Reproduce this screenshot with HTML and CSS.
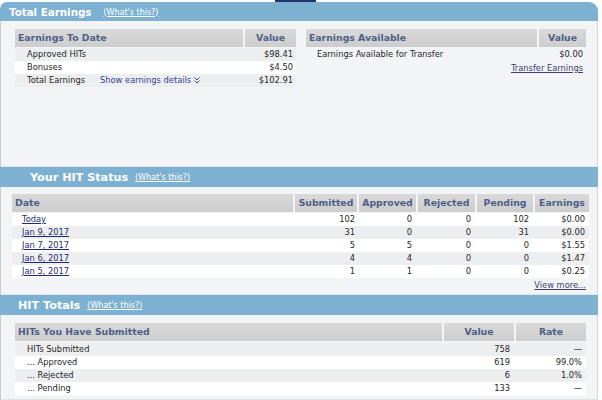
FILE: index.html
```html
<!DOCTYPE html>
<html>
<head>
<meta charset="utf-8">
<link rel="stylesheet" href="styles.css">
</head>
<body>
<div class="page">
  <div class="topstrip"><span class="tab"></span></div>

  <section class="sec">
    <div class="bar bar-round bar-earn">
      <span class="bar-title t-earn">Total Earnings</span>
      <a class="whats w-earn">(What's this?)</a>
    </div>
    <div class="panel panel-earn">
      <div class="tbl tbl-todate">
        <div class="thead g-todate">
          <div class="th th-left">Earnings To Date</div>
          <div class="th th-sep">Value</div>
        </div>
        <div class="row row-todate r-gray"><span>Approved HITs</span><span></span><span class="num">$98.41</span></div>
        <div class="row row-todate r-white"><span>Bonuses</span><span></span><span class="num">$4.50</span></div>
        <div class="row row-todate r-gray"><span>Total Earnings</span><a class="details">Show earnings details <svg class="chev" width="6" height="7" viewBox="0 0 6 7"><path d="M0.5 0.5 L3 3 L5.5 0.5 M0.5 3.5 L3 6 L5.5 3.5" fill="none" stroke="#3b4a8c" stroke-width="1"/></svg></a><span class="num">$102.91</span></div>
      </div>
      <div class="tbl tbl-avail">
        <div class="thead g-avail">
          <div class="th th-left">Earnings Available</div>
          <div class="th th-sep">Value</div>
        </div>
        <div class="row row-avail r-panel"><span>Earnings Available for Transfer</span><span class="num">$0.00</span></div>
        <div class="row row-link"><a class="transfer">Transfer Earnings</a></div>
      </div>
    </div>
  </section>

  <section class="sec">
    <div class="bar bar-status">
      <span class="bar-title t-big t-status">Your HIT Status</span>
      <a class="whats w-small">(What's this?)</a>
    </div>
    <div class="panel panel-status">
      <div class="tbl tbl-status">
        <div class="thead g-status">
          <div class="th th-left">Date</div>
          <div class="th th-sep">Submitted</div>
          <div class="th th-sep">Approved</div>
          <div class="th th-sep">Rejected</div>
          <div class="th th-sep">Pending</div>
          <div class="th th-sep">Earnings</div>
        </div>
        <div class="row g-status r-white"><a class="date">Today</a><span class="n1">102</span><span class="n">0</span><span class="n">0</span><span class="n">102</span><span class="n">$0.00</span></div>
        <div class="row g-status r-gray"><a class="date">Jan 9, 2017</a><span class="n1">31</span><span class="n">0</span><span class="n">0</span><span class="n">31</span><span class="n">$0.00</span></div>
        <div class="row g-status r-white"><a class="date">Jan 7, 2017</a><span class="n1">5</span><span class="n">5</span><span class="n">0</span><span class="n">0</span><span class="n">$1.55</span></div>
        <div class="row g-status r-gray"><a class="date">Jan 6, 2017</a><span class="n1">4</span><span class="n">4</span><span class="n">0</span><span class="n">0</span><span class="n">$1.47</span></div>
        <div class="row g-status r-white"><a class="date">Jan 5, 2017</a><span class="n1">1</span><span class="n">1</span><span class="n">0</span><span class="n">0</span><span class="n">$0.25</span></div>
        <div class="row row-more"><a class="more">View more...</a></div>
      </div>
    </div>
  </section>

  <section class="sec">
    <div class="bar bar-totals">
      <span class="bar-title t-big t-totals">HIT Totals</span>
      <a class="whats w-small">(What's this?)</a>
    </div>
    <div class="panel panel-totals">
      <div class="tbl tbl-totals">
        <div class="thead g-totals">
          <div class="th th-left">HITs You Have Submitted</div>
          <div class="th th-sep">Value</div>
          <div class="th th-sep">Rate</div>
        </div>
        <div class="row g-totals r-gray"><span class="lbl">HITs Submitted</span><span class="n">758</span><span class="n">&mdash;</span></div>
        <div class="row g-totals r-white"><span class="lbl">... Approved</span><span class="n">619</span><span class="n">99.0%</span></div>
        <div class="row g-totals r-gray"><span class="lbl">... Rejected</span><span class="n">6</span><span class="n">1.0%</span></div>
        <div class="row g-totals r-white"><span class="lbl">... Pending</span><span class="n">133</span><span class="n">&mdash;</span></div>
      </div>
    </div>
  </section>
</div>
</body>
</html>
```

FILE: styles.css
```css
html, body {
  margin: 0;
  padding: 0;
  background: #ffffff;
}
body {
  font-family: "DejaVu Sans", Verdana, sans-serif;
  font-size: 8.3px;
  color: #262626;
  width: 602px;
  height: 400px;
  overflow: hidden;
}
.page {
  width: 598px;
}
.topstrip {
  height: 2px;
  display: flex;
  padding-left: 275px;
}
.tab {
  width: 41px;
  height: 2px;
  background: #22336e;
}
.bar {
  display: flex;
  align-items: center;
  background: #7cb1d2;
  color: #ffffff;
  height: 20px;
  box-sizing: border-box;
}
.bar-round {
  border-radius: 7px 9px 0 0;
  height: 19px;
}
.bar-title {
  font-weight: bold;
  font-size: 10.3px;
}
.t-earn { padding-left: 9px; }
.t-big { font-size: 11.2px; }
.t-status { padding-left: 30px; }
.t-totals { padding-left: 18px; }
.whats {
  color: #ffffff;
  text-decoration: underline;
  font-size: 8px;
  padding-top: 1px;
}
.w-earn { margin-left: 12px; }
.w-small { margin-left: 7px; }

.panel {
  background: #f2f4f6;
  border-left: 1px solid #c5cbd2;
  border-right: 1px solid #d4d9de;
  border-bottom: 1px solid #dde2e6;
  box-sizing: border-box;
}
.panel-earn {
  height: 146px;
  padding: 8px 0 0 14px;
  display: flex;
  gap: 10px;
  align-items: flex-start;
}
.panel-status {
  height: 108px;
  padding: 7px 0 0 11px;
}
.panel-totals {
  height: 85px;
  padding: 8px 0 0 14px;
}

.thead {
  display: grid;
  height: 18px;
  margin-bottom: 1px;
}
.th {
  background: linear-gradient(#d9d9d9, #cdcdcd);
  color: #4d5f88;
  font-weight: bold;
  font-size: 9.3px;
  line-height: 18px;
  text-align: center;
  white-space: nowrap;
}
.th-left {
  text-align: left;
  padding-left: 3px;
}
.th-sep {
  border-left: 2px solid #f4f5f6;
}

.tbl-todate { width: 281px; }
.g-todate { grid-template-columns: 228px 53px; }
.tbl-avail { width: 280px; }
.g-avail { grid-template-columns: 231px 49px; }
.tbl-status { width: 577px; }
.g-status { grid-template-columns: 281px 64px 59px 59px 58px 56px; }
.tbl-totals { width: 571px; }
.g-totals { grid-template-columns: 427px 72px 72px; }
.g-totals.thead { margin-bottom: 2px; }

.row {
  height: 13px;
  line-height: 13px;
  white-space: nowrap;
}
.r-gray { background: #edeef0; }
.r-white { background: #ffffff; }
.r-panel { background: #f2f4f6; }

.row-todate {
  display: grid;
  grid-template-columns: 73px 1fr auto;
  padding: 0 3px 0 12px;
}
.row-avail {
  display: flex;
  justify-content: space-between;
  padding: 0 3px 0 11px;
}
.row-link {
  display: flex;
  justify-content: flex-end;
  padding-right: 3px;
  margin-top: 1px;
}
.num { text-align: right; }
.details {
  color: #34458a;
  display: inline-flex;
  align-items: center;
  gap: 3px;
}
.chev { display: inline-block; }
.transfer {
  color: #3c416e;
  text-decoration: underline;
}

.row.g-status, .row.g-totals {
  display: grid;
}
.date {
  color: #1f2c72;
  text-decoration: underline;
  padding-left: 10px;
}
.n1 {
  text-align: right;
  padding-right: 2px;
}
.n {
  text-align: right;
  padding-right: 4px;
}
.lbl { padding-left: 12px; }
.row-more {
  display: flex;
  justify-content: flex-end;
  padding-right: 3px;
  margin-top: 1px;
}
.more {
  color: #3c416e;
  text-decoration: underline;
}
```
